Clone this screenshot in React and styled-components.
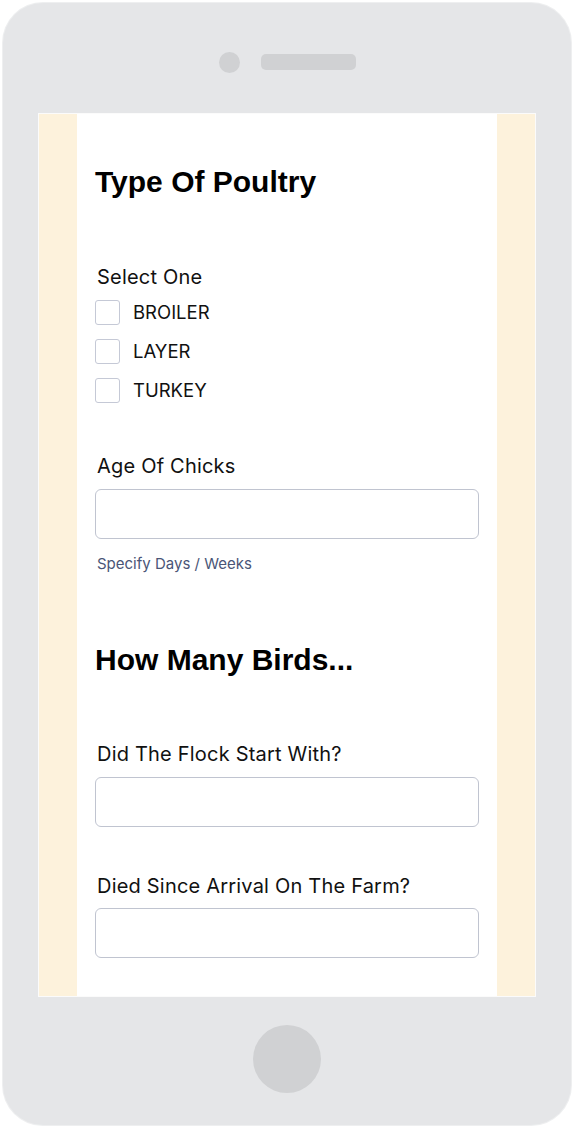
import styled, { createGlobalStyle } from "styled-components";

const GlobalStyle = createGlobalStyle`
  html, body {
    margin: 0;
    padding: 0;
    background: #ffffff;
  }
  * {
    box-sizing: border-box;
  }
`;

const Phone = styled.div`
  margin: 3px;
  width: 568px;
  height: 1122px;
  border-radius: 40px;
  background: #e5e6e8;
  box-shadow: 0 0 0 1px #eeeff0;
  display: flex;
  flex-direction: column;
  align-items: center;
`;

const TopBar = styled.div`
  height: 110px;
  width: 100%;
  display: flex;
  justify-content: center;
  align-items: flex-start;
  padding-top: 49px;
  gap: 21px;
`;

const Camera = styled.div`
  width: 21px;
  height: 21px;
  border-radius: 50%;
  background: #d0d1d3;
`;

const Speaker = styled.div`
  width: 95px;
  height: 16px;
  margin-top: 2px;
  border-radius: 5px;
  background: #d0d1d3;
`;

const Screen = styled.div`
  width: 498px;
  height: 884px;
  border: 1px solid #fbfbfb;
  display: flex;
  overflow: hidden;
`;

const SideBar = styled.div`
  width: 38px;
  background: #fdf2dc;
`;

const Content = styled.div`
  width: 420px;
  background: #ffffff;
  padding: 53px 18px 0;
  display: flex;
  flex-direction: column;
`;

const Heading = styled.h2`
  margin: ${(p) => p.$top || 0}px 0 0;
  font-family: "Liberation Sans", Arial, sans-serif;
  font-weight: 700;
  font-size: 30px;
  line-height: 30px;
  color: #000000;
`;

const Label = styled.div`
  margin: ${(p) => p.$top || 0}px 0 0 2px;
  font-family: Inter, "Noto Sans", sans-serif;
  font-size: 20px;
  line-height: 20px;
  letter-spacing: 0.2px;
  color: #111111;
`;

const Options = styled.div`
  margin-top: 13px;
  display: flex;
  flex-direction: column;
  gap: 14px;
`;

const Option = styled.label`
  display: flex;
  align-items: center;
  gap: 13px;
  font-family: Inter, "Noto Sans", sans-serif;
  font-size: 18.5px;
  line-height: 19px;
  color: #111111;
`;

const Box = styled.span`
  width: 25px;
  height: 25px;
  border: 1.5px solid #c5c9d6;
  border-radius: 3px;
  background: #ffffff;
`;

const Input = styled.div`
  margin-top: ${(p) => p.$top || 13}px;
  width: 384px;
  height: 50px;
  border: 1.5px solid #c0c4d0;
  border-radius: 6px;
  background: #ffffff;
`;

const Help = styled.div`
  margin: 17px 0 0 2px;
  font-family: Inter, "Noto Sans", sans-serif;
  font-size: 15px;
  line-height: 15px;
  color: #4a5577;
`;

const BottomBar = styled.div`
  flex: 1;
  display: flex;
  justify-content: center;
  padding-top: 28px;
`;

const HomeButton = styled.div`
  width: 68px;
  height: 68px;
  border-radius: 50%;
  background: #d0d1d3;
`;

const App = () => {
  return (
    <>
      <GlobalStyle />
      <Phone>
        <TopBar>
          <Camera />
          <Speaker />
        </TopBar>
        <Screen>
          <SideBar />
          <Content>
            <Heading>Type Of Poultry</Heading>
            <Label $top={70}>Select One</Label>
            <Options>
              <Option>
                <Box />
                BROILER
              </Option>
              <Option>
                <Box />
                LAYER
              </Option>
              <Option>
                <Box />
                TURKEY
              </Option>
            </Options>
            <Label $top={53}>Age Of Chicks</Label>
            <Input />
            <Help>Specify Days / Weeks</Help>
            <Heading $top={74}>How Many Birds...</Heading>
            <Label $top={69}>Did The Flock Start With?</Label>
            <Input />
            <Label $top={49}>Died Since Arrival On The Farm?</Label>
            <Input $top={12} />
          </Content>
          <SideBar />
        </Screen>
        <BottomBar>
          <HomeButton />
        </BottomBar>
      </Phone>
    </>
  );
};

export default App;
